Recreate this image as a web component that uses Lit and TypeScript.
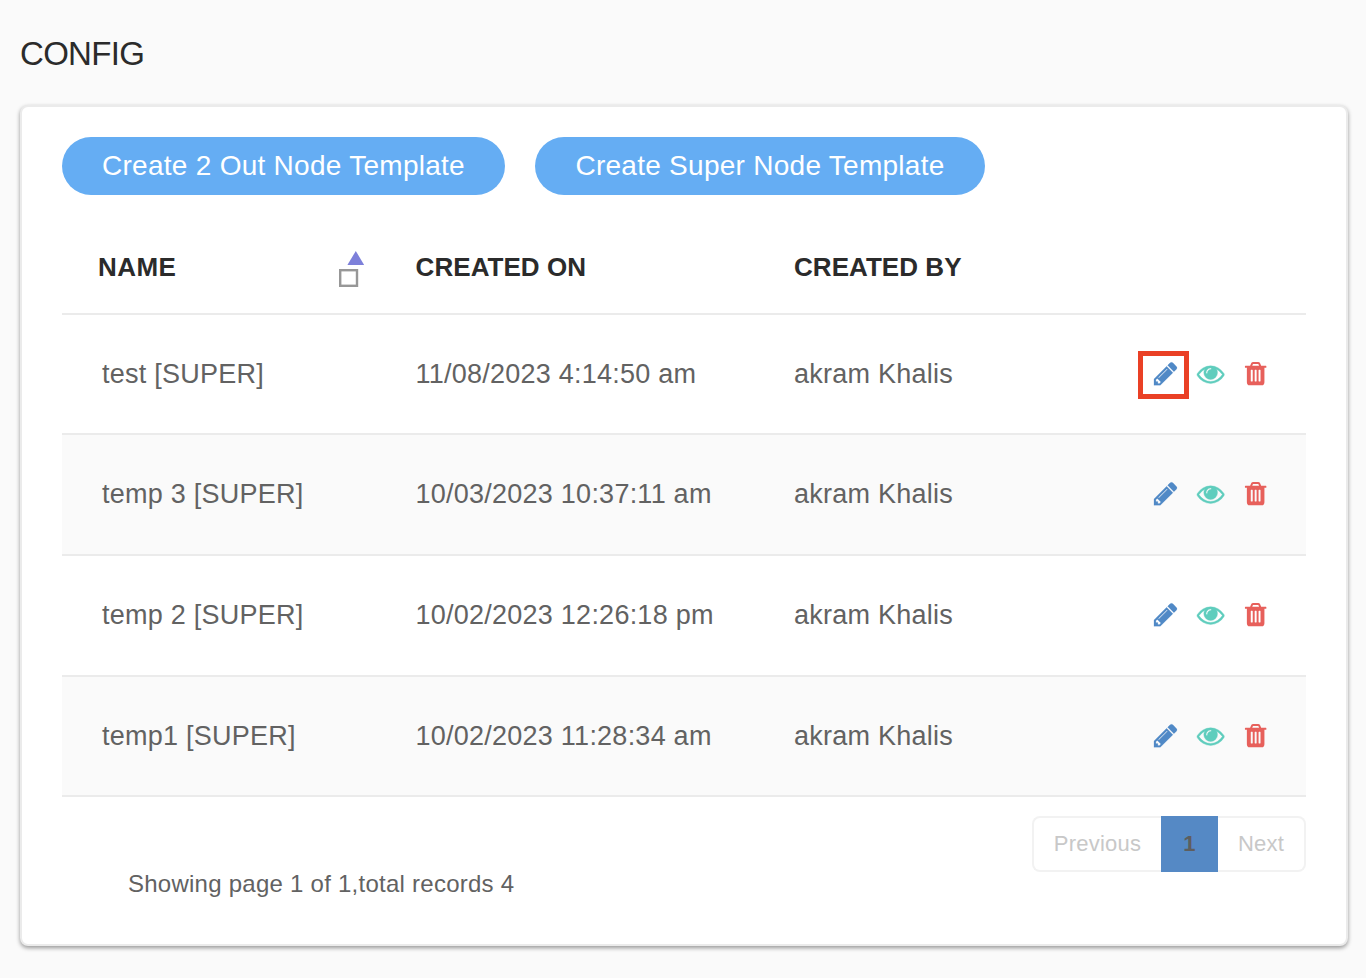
import { LitElement, html, css } from "lit";
import { customElement } from "lit/decorators.js";

const PENCIL = "M491 1536l91-91-235-235-91 91v107h128v128h107zm523-928q0-22-22-22-10 0-17 7l-542 542q-7 7-7 17 0 22 22 22 10 0 17-7l542-542q7-7 7-17zm-54-192l416 416-832 832h-416v-416zm683 96q0 53-37 90l-166 166-416-416 166-165q36-38 90-38 53 0 91 38l235 234q37 39 37 91z";
const EYE = "M1664 960q-152-236-381-353 61 104 61 225 0 185-131.5 316.5t-316.5 131.5-316.5-131.5-131.5-316.5q0-121 61-225-229 117-381 353 133 205 333.5 326.5t434.5 121.5 434.5-121.5 333.5-326.5zm-720-384q0-20-14-34t-34-14q-125 0-214.5 89.5t-89.5 214.5q0 20 14 34t34 14 34-14 14-34q0-86 61-147t147-61q20 0 34-14t14-34zm848 384q0 34-20 69-140 230-376.5 368.5t-499.5 138.5-499.5-139-376.5-368q-20-35-20-69t20-69q140-229 376.5-368t499.5-139 499.5 139 376.5 368q20 35 20 69z";
const TRASH = "M704 1376v-704q0-14-9-23t-23-9h-64q-14 0-23 9t-9 23v704q0 14 9 23t23 9h64q14 0 23-9t9-23zm256 0v-704q0-14-9-23t-23-9h-64q-14 0-23 9t-9 23v704q0 14 9 23t23 9h64q14 0 23-9t9-23zm256 0v-704q0-14-9-23t-23-9h-64q-14 0-23 9t-9 23v704q0 14 9 23t23 9h64q14 0 23-9t9-23zm-544-992h448l-48-117q-7-9-17-11h-317q-10 2-17 11zm928 32v64q0 14-9 23t-23 9h-96v948q0 83-47 143.5t-113 60.5h-832q-66 0-113-58.5t-47-141.5v-952h-96q-14 0-23-9t-9-23v-64q0-14 9-23t23-9h309l70-167q15-37 54-63t79-26h320q40 0 79 26t54 63l70 167h309q14 0 23 9t9 23z";

const icon = (path: string, name: string) =>
  html`<svg class="icon ${name}" viewBox="0 0 1792 1792"><path d=${path}></path></svg>`;

@customElement("app-root")
export class AppRoot extends LitElement {
  static styles = css`
    * { box-sizing: border-box; }
    :host { display: block; box-sizing: border-box; height: 978px; padding: 32px 18px 0 20px; background: #fafafa;
      overflow: hidden; font-family: "Liberation Sans", Arial, sans-serif; color: #626262; }
    h1 { margin: 0; height: 73px; font-size: 33px; line-height: 44px; font-weight: 400; letter-spacing: -.7px;
      color: #2b2b2b; }
    .card { height: 841px; padding: 30px 40px 0; background: #fff; border: 2px solid #ebebeb; border-radius: 8px;
      box-shadow: 0 2px 4px rgba(0, 0, 0, .4); }
    .buttons { display: flex; gap: 30px; }
    button { height: 58px; padding: 0; width: 443px; border: 0; border-radius: 29px; background: #65adf3;
      color: #fff; font: 28px "Liberation Sans", Arial, sans-serif; letter-spacing: .27px; }
    .wide { width: 450px; }
    .row { display: grid; grid-template-columns: 353.6px 378.4px 1fr 168px; align-items: center; height: 121px;
      border-bottom: 2px solid #ebebeb; font-size: 27px; letter-spacing: .24px; }
    .row:nth-child(2), .row:last-child { height: 120px; }
    .row:nth-child(odd) { background: #fafafa; }
    .row.head { height: 120px; padding-top: 26px; font-weight: 700; font-size: 26px; letter-spacing: .05px;
      color: #2b2b2b; background: #fff; }
    .name { padding-left: 40px; }
    .head .name { padding: 0 51.6px 0 36px; display: flex; justify-content: space-between; align-items: center;
      letter-spacing: .45px; }
    .sort { display: block; width: 26px; height: 38px; margin: 4px 0 0; }
    .icons { display: flex; align-items: center; }
    .edit { display: grid; place-items: center; width: 51px; height: 48px; margin-right: 7.5px; padding-left: 4px; }
    .marked { margin-top: 1px; outline: 5px solid #ea4025; outline-offset: -5px; }
    .icon { display: block; width: 27.3px; height: 27.3px; margin-top: -1.2px; }
    .pencil { fill: #5089c6; stroke: #5089c6; stroke-width: 10; }
    .eye { fill: #5fcdbd; stroke: #5fcdbd; stroke-width: 26; margin-right: 18px; overflow: visible; }
    .trash { fill: #e7605b; }
    .footer { display: flex; justify-content: space-between; padding: 19px 0 0 66px; }
    .summary { margin-top: 54px; font-size: 24px; line-height: 28px; letter-spacing: .25px; }
    .pager { display: grid; grid-template-columns: 129px 57px 88px; width: 274px; height: 56px; font-size: 22px;
      color: #c8c8c8; letter-spacing: .25px; }
    .pager span { display: grid; place-items: center; border: 2px solid #f2f2f2; }
    .pager .prev { border-right: 0; border-radius: 8px 0 0 8px; }
    .pager .next { border-left: 0; border-radius: 0 8px 8px 0; }
    .pager .current { border: 0; background: #5589c5; color: #5e5e5e; font-weight: 700; }
  `;
  render() {
    const rows = [
      ["test [SUPER]", "11/08/2023 4:14:50 am"],
      ["temp 3 [SUPER]", "10/03/2023 10:37:11 am"],
      ["temp 2 [SUPER]", "10/02/2023 12:26:18 pm"],
      ["temp1 [SUPER]", "10/02/2023 11:28:34 am"],
    ];
    return html`<h1>CONFIG</h1>
      <div class="card">
        <div class="buttons">
          <button>Create 2 Out Node Template</button>
          <button class="wide">Create Super Node Template</button>
        </div>
        <div>
          <div class="row head">
            <div class="name">NAME
              <svg class="sort" viewBox="0 0 26 38">
                <path d="M17.8 1 L26.2 15 H9.4 Z" fill="#7d80da"></path>
                <rect x="2.2" y="20.2" width="16.8" height="15.6" fill="#fff" stroke="#979797" stroke-width="2.4"></rect>
              </svg>
            </div>
            <div>CREATED ON</div>
            <div>CREATED BY</div>
          </div>
          ${rows.map((r, i) => html`<div class="row">
            <div class="name">${r[0]}</div>
            <div>${r[1]}</div>
            <div>akram Khalis</div>
            <div class="icons">
              <div class="edit ${i === 0 ? "marked" : ""}">${icon(PENCIL, "pencil")}</div>
              ${icon(EYE, "eye")}${icon(TRASH, "trash")}
            </div>
          </div>`)}
        </div>
        <div class="footer">
          <div class="summary">Showing page 1 of 1,total records 4</div>
          <div class="pager"><span class="prev">Previous</span><span class="current">1</span><span class="next">Next</span></div>
        </div>
      </div>`;
  }
}
